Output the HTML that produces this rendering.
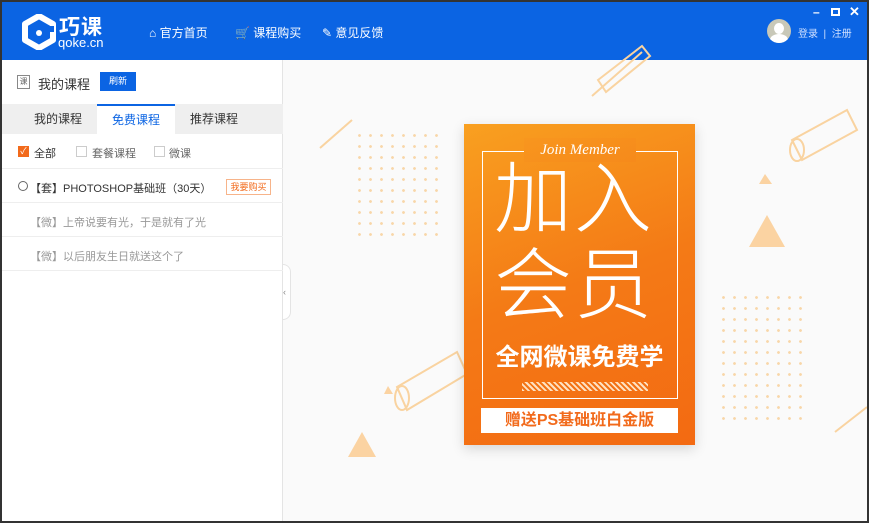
<!DOCTYPE html>
<html><head><meta charset="utf-8"><style>
*{margin:0;padding:0;box-sizing:border-box}
body{width:869px;height:523px;overflow:hidden;background:#333;font-family:"Liberation Sans","Noto Sans CJK SC",sans-serif;position:relative}
.win{position:absolute;left:2px;top:2px;width:865px;height:519px;background:#fafafa;overflow:hidden}
.hdr{position:absolute;left:0;top:0;width:865px;height:58px;background:#0b64e3;color:#fff}
.nav{position:absolute;top:22px;font-size:12px;color:#fff}
.left{position:absolute;left:0;top:58px;width:281px;height:461px;background:#fff;border-right:1px solid #e4e4e4}
.tabs{position:absolute;top:44px;left:0;width:281px;height:30px;background:#efefef}
.tab{position:absolute;top:0;height:30px;line-height:30px;font-size:12px;color:#333;text-align:center;width:78px}
.row{position:absolute;left:0;width:281px;border-bottom:1px solid #eee;font-size:11px;color:#999}
.dots{position:absolute;background-image:radial-gradient(circle,#f8d6a8 1.2px,transparent 1.6px);background-size:11px 11px}
</style></head><body><div class="win">
<div class="hdr">
 <svg style="position:absolute;left:20px;top:12px" width="34" height="36" viewBox="0 0 34 36"><path d="M17 2 L31 10 L31 26 L17 34 L3 26 L3 10 Z" fill="none" stroke="#fff" stroke-width="6" stroke-linejoin="round"/><circle cx="17" cy="19" r="3" fill="#fff"/><rect x="20" y="12" width="12" height="6" fill="#0b64e3"/></svg>
 <div style="position:absolute;left:57px;top:9px;font-size:21px;font-weight:bold;letter-spacing:1px">巧课</div>
 <div style="position:absolute;left:56px;top:33px;font-size:13px">qoke.cn</div>
 <div class="nav" style="left:147px">⌂ 官方首页</div>
 <div class="nav" style="left:233px">🛒 课程购买</div>
 <div class="nav" style="left:320px">✎ 意见反馈</div>
 <div style="position:absolute;left:765px;top:17px;width:24px;height:24px;border-radius:50%;background:#c8c8b8;overflow:hidden"><div style="position:absolute;left:7px;top:4px;width:10px;height:11px;border-radius:50%;background:#fff"></div><div style="position:absolute;left:3px;top:15px;width:18px;height:12px;border-radius:50%;background:#fff"></div></div>
 <div style="position:absolute;left:796px;top:23px;font-size:10px;color:#cfe0ff">登录 &nbsp;|&nbsp; 注册</div>
 <div style="position:absolute;left:811px;top:3px;font-size:12px;font-weight:bold">–</div>
 <div style="position:absolute;left:829px;top:6px;width:9px;height:8px;border:2px solid #fff"></div>
 <div style="position:absolute;left:847px;top:2px;font-size:13px;font-weight:bold">✕</div>
</div>
<div class="left">
 <div style="position:absolute;left:15px;top:15px;width:13px;height:14px;border:1px solid #888;font-size:8px;color:#666;text-align:center">课</div>
 <div style="position:absolute;left:36px;top:14px;font-size:13px;color:#333">我的课程</div>
 <div style="position:absolute;left:98px;top:12px;width:36px;height:19px;background:#0b64e3;color:#fff;font-size:9px;text-align:center;line-height:19px">刷新</div>
 <div class="tabs">
  <div class="tab" style="left:17px">我的课程</div>
  <div class="tab" style="left:95px;background:#fff;color:#0b64e3;border-top:2px solid #0b64e3;line-height:28px">免费课程</div>
  <div class="tab" style="left:173px">推荐课程</div>
 </div>
 <div class="row" style="top:74px;height:35px">
  <div style="position:absolute;left:16px;top:12px;width:11px;height:11px;background:#f26a1b;color:#fff;font-size:9px;line-height:11px;text-align:center">✓</div>
  <div style="position:absolute;left:32px;top:11px;color:#333">全部</div>
  <div style="position:absolute;left:74px;top:12px;width:11px;height:11px;border:1px solid #ccc"></div>
  <div style="position:absolute;left:90px;top:11px;color:#666">套餐课程</div>
  <div style="position:absolute;left:152px;top:12px;width:11px;height:11px;border:1px solid #ccc"></div>
  <div style="position:absolute;left:167px;top:11px;color:#666">微课</div>
 </div>
 <div class="row" style="top:109px;height:34px">
  <div style="position:absolute;left:16px;top:12px;width:10px;height:10px;border:1px solid #666;border-radius:50%"></div>
  <div style="position:absolute;left:28px;top:11px;color:#333">【套】PHOTOSHOP基础班（30天）</div>
  <div style="position:absolute;left:224px;top:10px;width:45px;height:16px;border:1px solid #f7b48a;color:#f26a1b;font-size:9px;line-height:14px;text-align:center">我要购买</div>
 </div>
 <div class="row" style="top:143px;height:34px"><div style="position:absolute;left:28px;top:11px">【微】上帝说要有光，于是就有了光</div></div>
 <div class="row" style="top:177px;height:34px"><div style="position:absolute;left:28px;top:11px">【微】以后朋友生日就送这个了</div></div>
</div>
<div style="position:absolute;left:281px;top:262px;width:8px;height:56px;border:1px solid #e4e4e4;border-left:none;border-radius:0 8px 8px 0;background:#fff;font-size:9px;color:#888;line-height:54px">‹</div>
<div class="dots" style="left:352px;top:128px;width:88px;height:110px"></div>
<div class="dots" style="left:716px;top:290px;width:88px;height:132px"></div>
<svg style="position:absolute;left:0;top:0" width="865" height="519">
 <g stroke="#f9d3a0" stroke-width="2" fill="none">
  <line x1="318" y1="146" x2="350" y2="118"/>
  <line x1="833" y1="430" x2="865" y2="405"/>
  <line x1="590" y1="94" x2="640" y2="50"/>
  <path d="M596 78 L640 44 L648 54 L604 90 Z"/>
  <path d="M790 138 L845 108 L855 128 L800 158 Z"/>
  <ellipse cx="795" cy="148" rx="7" ry="11"/>
  <path d="M395 385 L455 350 L465 372 L405 408 Z"/>
  <ellipse cx="400" cy="396" rx="7" ry="12"/>
 </g>
 <polygon points="765,213 747,245 783,245" fill="#fbd3a2"/>
 <polygon points="763,172 757,182 770,182" fill="#fbd3a2"/>
 <polygon points="360,430 346,455 374,455" fill="#fbd3a2"/>
 <polygon points="386,384 382,392 391,392" fill="#fbd3a2"/>
</svg>
<div style="position:absolute;left:462px;top:122px;width:231px;height:321px;background:linear-gradient(160deg,#f9a020,#f47a16 50%,#f36a12);box-shadow:0 4px 12px rgba(0,0,0,.15)">
 <div style="position:absolute;left:18px;top:27px;width:196px;height:248px;border:1.5px solid #fff"></div>
 <div style="position:absolute;left:60px;top:14px;width:112px;height:24px;background:linear-gradient(160deg,#f8961e,#f68a1b);color:#fff;font-family:'Liberation Serif',serif;font-style:italic;font-size:15px;text-align:center;line-height:24px">Join Member</div>
 <div style="position:absolute;left:30px;top:32px;color:#fff;font-size:78px;line-height:86px;font-weight:300;letter-spacing:2px;width:190px">加入<br>会员</div>
 <div style="position:absolute;left:0;top:213px;width:231px;text-align:center;color:#fff;font-size:24px;font-weight:bold">全网微课免费学</div>
 <div style="position:absolute;left:58px;top:258px;width:126px;height:9px;background:repeating-linear-gradient(45deg,#fde0c0 0 2px,transparent 2px 4px)"></div>
 <div style="position:absolute;left:17px;top:284px;width:197px;height:25px;background:#fff;color:#f26a1b;font-size:16px;text-align:center;line-height:25px;font-weight:bold">赠送PS基础班白金版</div>
</div>
</div></body></html>
